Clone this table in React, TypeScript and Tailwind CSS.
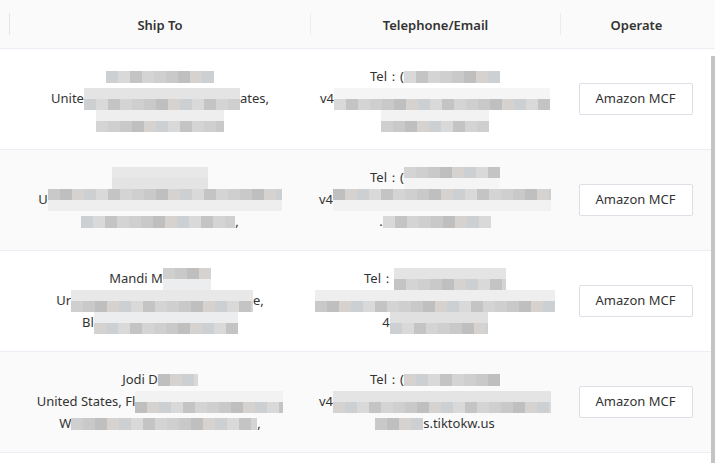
import React from "react";

type Seg = { t?: string; m?: number; rows?: string; seed?: number };

const dark = ["#c9c9c9", "#cfcfcf", "#d4d4d4", "#c4c4c4", "#d9d9d9", "#cdd0d3", "#d6d2cf", "#bfbfbf"];
const light = ["#e8e8e8", "#eeeeee", "#f2f2f2", "#e4e4e4", "#f5f5f5", "#ebedef", "#e0e0e0"];

function Mosaic({ w, rows = "d", seed = 1 }: { w: number; rows?: string; seed?: number }) {
  const cols = Math.ceil(w / 12);
  const h = rows.length === 1 ? 12 : 11;
  return (
    <span className="inline-flex flex-col overflow-hidden shrink-0" style={{ width: w }}>
      {rows.split("").map((r, ri) => (
        <span key={ri} className="flex">
          {Array.from({ length: cols }).map((_, ci) => {
            const pal = r === "d" ? dark : light;
            const c = pal[(ci * 7 + ri * 3 + seed * 5) % pal.length];
            return <span key={ci} className="shrink-0" style={{ width: 12, height: h, background: c }} />;
          })}
        </span>
      ))}
    </span>
  );
}

function Line({ segs }: { segs: Seg[] }) {
  return (
    <div className="flex h-[22px] items-center justify-center whitespace-pre">
      {segs.map((s, i) =>
        s.m ? <Mosaic key={i} w={s.m} rows={s.rows} seed={s.seed ?? i} /> : <span key={i}>{s.t}</span>
      )}
    </div>
  );
}

const rows: { ship: Seg[][]; tel: Seg[][] }[] = [
  {
    ship: [
      [{ m: 108, seed: 1 }],
      [{ t: "Unite" }, { m: 156, rows: "ld", seed: 2 }, { t: "ates," }],
      [{ m: 128, rows: "ld", seed: 3 }],
    ],
    tel: [
      [{ t: "Tel：(" }, { m: 96, seed: 4 }],
      [{ t: "v4" }, { m: 216, rows: "ld", seed: 5 }],
      [{ m: 108, rows: "ld", seed: 6 }],
    ],
  },
  {
    ship: [
      [{ m: 96, rows: "ll", seed: 7 }],
      [{ t: "U" }, { m: 234, rows: "dl", seed: 8 }],
      [{ m: 154, seed: 9 }, { t: "," }],
    ],
    tel: [
      [{ t: "Tel：(" }, { m: 96, rows: "dl", seed: 10 }],
      [{ t: "v4" }, { m: 218, rows: "dl", seed: 11 }],
      [{ t: "." }, { m: 108, seed: 12 }],
    ],
  },
  {
    ship: [
      [{ t: "Mandi M" }, { m: 48, rows: "dl", seed: 13 }],
      [{ t: "Ur" }, { m: 182, rows: "ld", seed: 14 }, { t: "e," }],
      [{ t: "Bl" }, { m: 144, rows: "ld", seed: 15 }],
    ],
    tel: [
      [{ t: "Tel：" }, { m: 112, rows: "ld", seed: 16 }],
      [{ m: 240, rows: "ld", seed: 17 }],
      [{ t: "4" }, { m: 98, rows: "ld", seed: 18 }],
    ],
  },
  {
    ship: [
      [{ t: "Jodi D" }, { m: 40, seed: 19 }],
      [{ t: "United States, Fl" }, { m: 148, rows: "ld", seed: 20 }],
      [{ t: "W" }, { m: 186, seed: 21 }, { t: "," }],
    ],
    tel: [
      [{ t: "Tel：(" }, { m: 96, seed: 22 }],
      [{ t: "v4" }, { m: 218, rows: "ld", seed: 23 }],
      [{ m: 48, seed: 24 }, { t: "s.tiktokw.us" }],
    ],
  },
];

export default function App() {
  return (
    <div
      className="w-[715px] h-[463px] overflow-hidden bg-white text-[13px] text-[#333]"
      style={{ fontFamily: "'Noto Sans', 'Open Sans', sans-serif" }}
    >
      <div className="flex h-[49px] items-center border-b border-[#ebeef5] bg-[#fafafa] font-semibold">
        <div className="w-[10px] shrink-0 flex justify-end">
          <span className="h-[22px] w-px bg-[#e6e6e6]" />
        </div>
        <div className="w-[300px] shrink-0 pt-[3px] text-center">Ship To</div>
        <span className="h-[22px] w-px bg-[#ececec]" />
        <div className="w-[249px] shrink-0 pt-[3px] text-center">Telephone/Email</div>
        <span className="h-[22px] w-px bg-[#ececec]" />
        <div className="w-[151px] shrink-0 pt-[3px] text-center">Operate</div>
      </div>
      <div className="flex">
        <div className="w-[711px]">
          {rows.map((r, i) => (
            <div
              key={i}
              className={`flex h-[101px] items-center border-b border-[#ebeef5] ${i % 2 ? "bg-[#fafafa]" : "bg-white"}`}
            >
              <div className="w-[10px] shrink-0" />
              <div className="w-[300px] shrink-0">
                {r.ship.map((l, j) => (
                  <Line key={j} segs={l} />
                ))}
              </div>
              <div className="w-[250px] shrink-0">
                {r.tel.map((l, j) => (
                  <Line key={j} segs={l} />
                ))}
              </div>
              <div className="flex w-[151px] shrink-0 justify-center">
                <button className="h-[32px] w-[114px] rounded-[2px] border border-[#dcdfe6] bg-white text-[13px] text-[#333]">
                  Amazon MCF
                </button>
              </div>
            </div>
          ))}
        </div>
        <div className="mt-[7px] h-[420px] w-[4px] bg-[#c4c4c4]" />
      </div>
    </div>
  );
}
